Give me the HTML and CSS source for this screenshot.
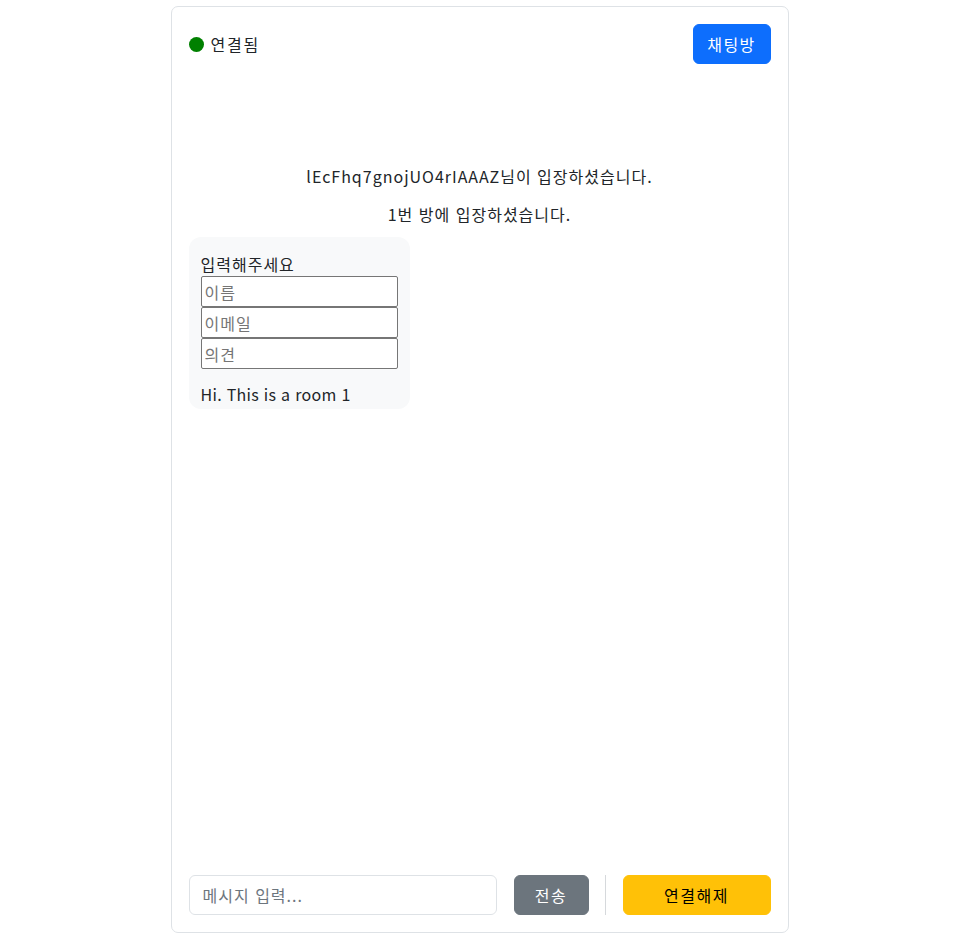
FILE: index.html
```html
<!DOCTYPE html>
<html lang="ko">
<head>
<meta charset="utf-8">
<title>채팅</title>
<link rel="stylesheet" href="styles.css">
</head>
<body>
<div class="card">
  <div class="header">
    <div class="status"><span class="dot"></span><span class="status-text">연결됨</span></div>
    <button class="btn btn-primary btn-room">채팅방</button>
  </div>
  <div class="chat">
    <p class="notice first">lEcFhq7gnojUO4rIAAAZ님이 입장하셨습니다.</p>
    <p class="notice second">1번 방에 입장하셨습니다.</p>
    <div class="bubble">
      <div class="bubble-title">입력해주세요</div>
      <input class="field" type="text" placeholder="이름">
      <input class="field" type="text" placeholder="이메일">
      <input class="field" type="text" placeholder="의견">
      <div class="bubble-text">Hi. This is a room 1</div>
    </div>
  </div>
  <div class="footer">
    <input class="msg-input" type="text" placeholder="메시지 입력...">
    <button class="btn btn-secondary btn-send">전송</button>
    <div class="divider"></div>
    <button class="btn btn-warning btn-leave">연결해제</button>
  </div>
</div>
</body>
</html>
```

FILE: styles.css
```css
* { box-sizing: border-box; }
html, body { margin: 0; padding: 0; background: #fff; }
body {
  font-family: "Noto Sans CJK KR", "Noto Sans", sans-serif;
  font-size: 16px;
  line-height: 24px;
  letter-spacing: 1px;
  color: #212529;
}
.card {
  width: 618px;
  height: 927px;
  margin: 6px auto 0;
  border: 1px solid #dee2e6;
  border-radius: 7px;
  padding: 17px;
  display: flex;
  flex-direction: column;
}
.header {
  display: flex;
  align-items: center;
  justify-content: space-between;
  height: 40px;
}
.status { display: flex; align-items: center; gap: 7px; }
.status-text { letter-spacing: 1.8px; }
.dot {
  width: 15px; height: 15px; border-radius: 50%;
  background: #008000; display: inline-block;
}
.btn {
  font-family: inherit;
  font-size: 16px;
  line-height: 24px;
  letter-spacing: 1.5px;
  height: 40px;
  border: 1px solid transparent;
  border-radius: 6px;
  padding: 0 8px;
  cursor: pointer;
}
.btn-primary { background: #0d6efd; color: #fff; border-color: #0d6efd; }
.btn-room { width: 78px; }
.btn-secondary { background: #6c757d; color: #fff; border-color: #6c757d; }
.btn-send { width: 75px; margin-left: 17px; }
.btn-warning { background: #ffc107; color: #000; border-color: #ffc107; }
.btn-leave { width: 148px; margin-left: 17px; }
.chat {
  flex: 1;
  padding-top: 100px;
}
.notice { margin: 0; text-align: center; }
.notice.first { margin-bottom: 14px; }
.notice.second { margin-bottom: 11px; }
.bubble {
  width: 221px;
  background: #f8f9fa;
  border-radius: 12px;
  padding: 15px 12px 3px;
}
.bubble-title { line-height: 24px; }
.field {
  display: block;
  width: 197px;
  height: 31px;
  margin: 0;
  padding: 1px 3px;
  border: 1px solid #767676;
  border-radius: 2px;
  font-family: inherit;
  font-size: 16px;
  letter-spacing: 1px;
  color: #212529;
  background: #fff;
}
.field::placeholder { color: #757575; }
.bubble-text { margin-top: 13px; line-height: 24px; letter-spacing: 0.3px; }
.footer {
  display: flex;
  align-items: center;
  height: 40px;
}
.msg-input {
  width: 308px;
  height: 40px;
  border: 1px solid #dee2e6;
  border-radius: 6px;
  padding: 0 13px;
  font-family: inherit;
  font-size: 16px;
  letter-spacing: 1px;
  color: #212529;
}
.msg-input::placeholder { color: #6c757d; }
.divider { width: 1px; height: 40px; background: #d6d9dc; margin-left: 16px; }
```
